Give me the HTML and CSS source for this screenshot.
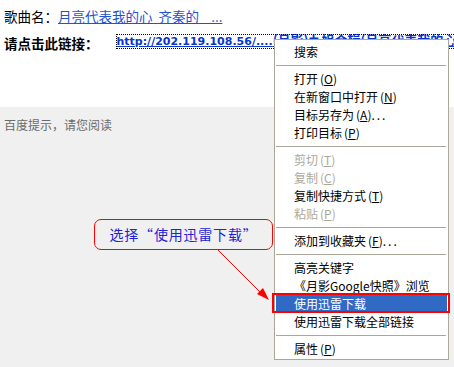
FILE: index.html
```html
<!DOCTYPE html>
<html lang="zh-CN">
<head>
    <meta charset="UTF-8">
    <meta name="viewport" content="width=device-width, initial-scale=1.0">
    <title>歌曲下载</title>
    <link rel="stylesheet" href="styles.css">
</head>
<body>
    <div class="song">
        <p class="row">歌曲名：<a href="#" class="title-link">月亮代表我的心&nbsp;&nbsp;齐秦的&nbsp;&nbsp;&nbsp;&nbsp;...</a></p>
        <p class="row row-bold">请点击此链接：<a href="#" class="url">http://202.119.108.56/....<span class="url-cn">(月影)九姐合辑(月亮代表我的心)</span></a></p>
    </div>
    <div class="tip">百度提示，请您阅读</div>

    <div class="callout">选择“使用迅雷下载”</div>

    <svg class="arrow" width="454" height="367" viewBox="0 0 454 367">
        <line x1="218" y1="250" x2="262" y2="294" stroke="#ff0000" stroke-width="1"/>
        <polygon points="269,300 257,294 263,288" fill="#ff0000"/>
    </svg>

    <ul class="menu">
        <li class="menu-item">搜索</li>
        <li class="menu-sep"></li>
        <li class="menu-item">打开<span class="key">(<u>O</u>)</span></li>
        <li class="menu-item">在新窗口中打开<span class="key">(<u>N</u>)</span></li>
        <li class="menu-item">目标另存为<span class="key">(<u>A</u>)</span><span class="dots">...</span></li>
        <li class="menu-item">打印目标<span class="key">(<u>P</u>)</span></li>
        <li class="menu-sep"></li>
        <li class="menu-item disabled">剪切<span class="key">(<u>T</u>)</span></li>
        <li class="menu-item disabled">复制<span class="key">(<u>C</u>)</span></li>
        <li class="menu-item">复制快捷方式<span class="key">(<u>T</u>)</span></li>
        <li class="menu-item disabled">粘贴<span class="key">(<u>P</u>)</span></li>
        <li class="menu-sep"></li>
        <li class="menu-item">添加到收藏夹<span class="key">(<u>F</u>)</span><span class="dots">...</span></li>
        <li class="menu-sep"></li>
        <li class="menu-item">高亮关键字</li>
        <li class="menu-item">《月影Google快照》浏览</li>
        <li class="menu-item active">使用迅雷下载</li>
        <li class="menu-item">使用迅雷下载全部链接</li>
        <li class="menu-sep"></li>
        <li class="menu-item">属性<span class="key">(<u>P</u>)</span></li>
    </ul>
</body>
</html>
```

FILE: styles.css
```css
body {
    margin: 0;
    height: 367px;
    overflow: hidden;
    font-family: "Noto Sans CJK SC", sans-serif;
    background-color: #f0f0f0;
}

.song {
    box-sizing: border-box;
    height: 107px;
    padding-top: 5px;
    background: #fff;
}

.row {
    margin: 0;
    padding-left: 4px;
    font-size: 13.5px;
    line-height: 23px;
    color: #000;
    white-space: nowrap;
}

.row-bold {
    font-weight: bold;
}

.title-link {
    color: #2152d6;
}

.url {
    margin-left: 18px;
    vertical-align: 4px;
    font-family: "DejaVu Sans", "Noto Sans CJK SC", sans-serif;
    font-size: 11px;
    color: #0a35c8;
    text-decoration: underline;
    outline: 1px dotted #000;
}

.url-cn {
    font-family: "Noto Sans CJK SC", sans-serif;
    font-size: 13px;
}

.tip {
    padding: 10px 4px;
    font-size: 12px;
    line-height: 16px;
    color: #6b6b6b;
}

/* annotation */
.callout {
    position: absolute;
    left: 94px;
    top: 219px;
    box-sizing: border-box;
    width: 179px;
    height: 31px;
    border: 1px solid #ff0000;
    border-radius: 7px;
    text-align: center;
    font-size: 14px;
    line-height: 29px;
    letter-spacing: 0.8px;
    color: #2222d8;
}

.arrow {
    position: absolute;
    left: 0;
    top: 0;
    pointer-events: none;
}

/* context menu */
.menu {
    position: absolute;
    left: 274px;
    top: 39px;
    box-sizing: border-box;
    width: 175px;
    margin: 0;
    padding: 3px 1px 1px;
    list-style: none;
    background: #fff;
    border: 1px solid #aca899;
    font-size: 12px;
}

.menu-item {
    height: 18px;
    padding-left: 18px;
    line-height: 18px;
    color: #000;
    white-space: nowrap;
}

.menu-item.disabled {
    color: #aca899;
}

.menu-item.active {
    position: relative;
    background: #316ac5;
    color: #fff;
}

.menu-item.active::after {
    content: "";
    position: absolute;
    left: -4px;
    right: -3px;
    top: -2px;
    bottom: 0;
    border: 2px solid #ff0000;
}

.menu-sep {
    height: 1px;
    margin: 4px 1px 4px 0;
    background: #aca899;
}

.key {
    margin-left: 2px;
}

.dots {
    letter-spacing: 2px;
}
```
